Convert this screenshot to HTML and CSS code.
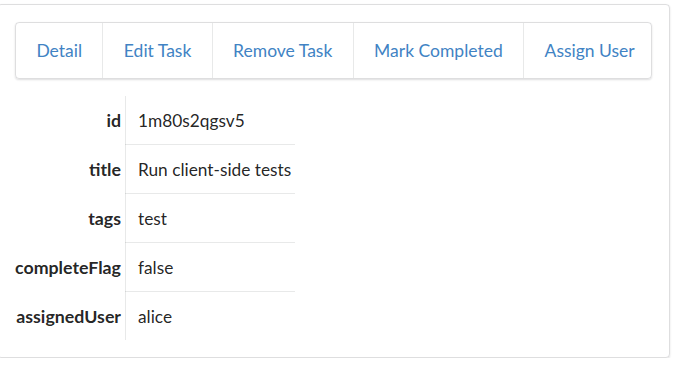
FILE: index.html
```html
<!DOCTYPE html>
<html lang="en">
<head>
    <meta charset="UTF-8">
    <title>Task Detail</title>
    <link rel="stylesheet" href="styles.css">
</head>
<body>
    <div class="segment">
        <div class="menu">
            <a class="item" href="#">Detail</a>
            <a class="item" href="#">Edit Task</a>
            <a class="item" href="#">Remove Task</a>
            <a class="item" href="#">Mark Completed</a>
            <a class="item" href="#">Assign User</a>
        </div>
        <table class="definition">
            <tr><td class="label">id</td><td class="value">1m80s2qgsv5</td></tr>
            <tr><td class="label">title</td><td class="value">Run client-side tests</td></tr>
            <tr><td class="label">tags</td><td class="value">test</td></tr>
            <tr><td class="label">completeFlag</td><td class="value">false</td></tr>
            <tr><td class="label">assignedUser</td><td class="value">alice</td></tr>
        </table>
    </div>
</body>
</html>
```

FILE: styles.css
```css
body {
    margin: 0;
    padding-top: 4px;
    font-family: Lato, 'Helvetica Neue', Arial, sans-serif;
    color: rgba(0, 0, 0, 0.87);
    background: #fff;
}
.segment {
    margin-left: -3px;
    width: 673px;
    box-sizing: border-box;
    padding: 17px;
    border: 1px solid rgba(34, 36, 38, 0.15);
    border-radius: 4px;
    box-shadow: 0 1px 2px 0 rgba(34, 36, 38, 0.15);
}
.menu {
    display: flex;
    height: 57px;
    box-sizing: border-box;
    border: 1px solid rgba(34, 36, 38, 0.15);
    border-radius: 4px;
    box-shadow: 0 1px 2px 0 rgba(34, 36, 38, 0.15);
}
.item {
    display: flex;
    align-items: center;
    padding: 0 20.4px;
    font-size: 17.5px;
    white-space: nowrap;
    color: #4183c4;
    text-decoration: none;
    border-right: 1px solid rgba(34, 36, 38, 0.1);
}
.item:last-child {
    border-right: none;
}
.definition {
    margin-top: 17px;
    border-collapse: collapse;
    font-size: 17.3px;
}
.definition td {
    height: 48px;
    padding: 0;
    white-space: nowrap;
}
.label {
    text-align: right;
    font-weight: bold;
    font-size: 17.8px;
    padding-right: 4px !important;
}
.value {
    padding: 0 4px 0 12px !important;
    border-left: 1px solid rgba(34, 36, 38, 0.1);
    border-bottom: 1px solid rgba(34, 36, 38, 0.1);
}
tr:last-child .value {
    border-bottom: none;
}
```
